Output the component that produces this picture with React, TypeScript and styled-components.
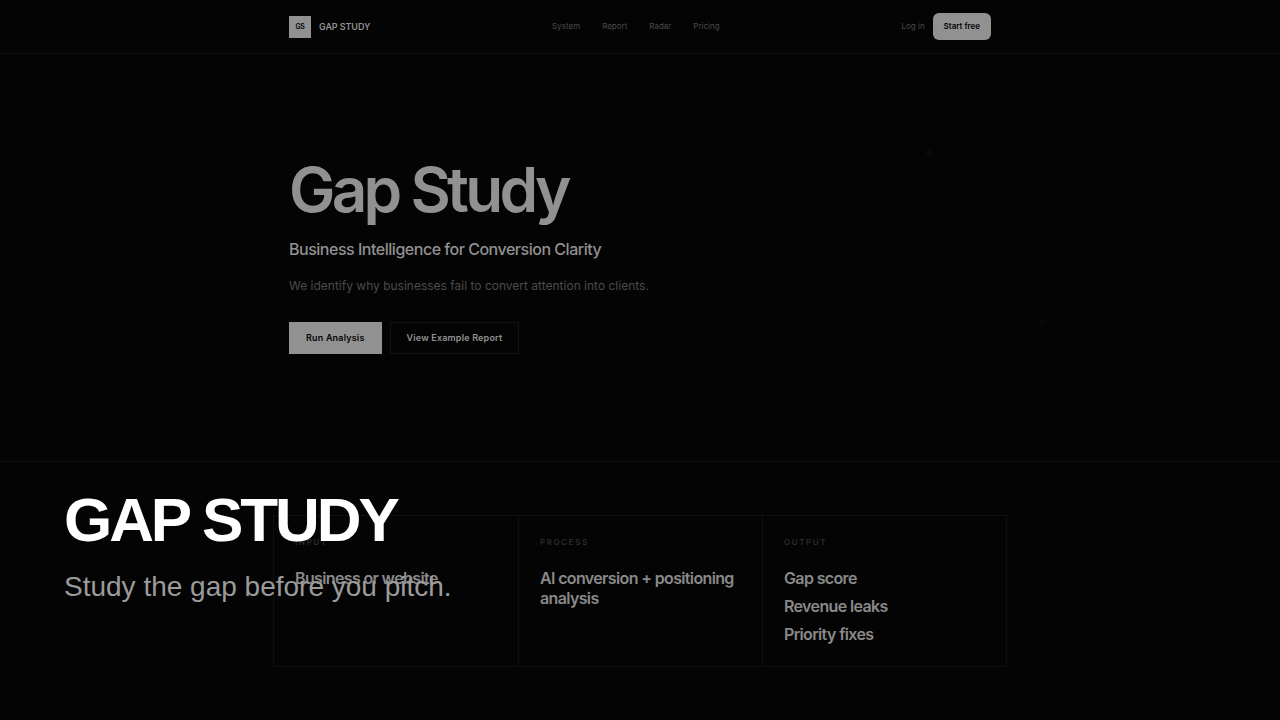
import React from "react";
import styled, { createGlobalStyle, css } from "styled-components";

const GlobalStyle = createGlobalStyle`
  *, *::before, *::after { box-sizing: border-box; }
  html { background: #040404; }
  body {
    margin: 0;
    background: #040404;
    color: #919191;
    font-family: Inter, "Liberation Sans", sans-serif;
  }
  h1, h2, p, ul { margin: 0; padding: 0; }
  ul { list-style: none; }
  a { color: inherit; text-decoration: none; }
  button { font-family: inherit; cursor: pointer; }
`;

const Page = styled.div`
  position: relative;
  min-height: 100vh;
`;

const Container = styled.div`
  width: 100%;
  max-width: 734px;
  margin: 0 auto;
  padding: 0 16px;
`;

const Header = styled.header`
  border-bottom: 1px solid #101010;
`;

const HeaderRow = styled(Container)`
  display: flex;
  align-items: center;
  justify-content: space-between;
  height: 53px;
`;

const Brand = styled.a`
  display: flex;
  align-items: center;
  gap: 8px;
  font-size: 9px;
  font-weight: 600;
  letter-spacing: -0.01em;
`;

const BrandMark = styled.span`
  display: grid;
  place-items: center;
  width: 22px;
  height: 22px;
  background: #919191;
  color: #040404;
  font-size: 7px;
  letter-spacing: -0.04em;
`;

const Nav = styled.nav`
  display: flex;
  gap: 22px;
  font-size: 8px;
  line-height: 11px;
  color: #4b4b4b;
`;

const Account = styled.div`
  display: flex;
  align-items: center;
  gap: 8px;
  font-size: 8px;
  line-height: 11px;
  color: #4b4b4b;
`;

const StartButton = styled.button`
  height: 27px;
  padding: 0 11px;
  border: 0;
  border-radius: 6px;
  background: #919191;
  color: #040404;
  font-size: 8px;
  line-height: 11px;
  font-weight: 600;
`;

const Hero = styled.section`
  position: relative;
  border-bottom: 1px solid #101010;
  padding: 104px 0 107px;
`;

const Title = styled.h1`
  font-size: 62px;
  line-height: 64px;
  font-weight: 600;
  letter-spacing: -0.06em;
`;

const Tagline = styled.p`
  margin-top: 15px;
  font-size: 16px;
  line-height: 24px;
  letter-spacing: -0.03em;
  font-weight: 500;
`;

const Description = styled.p`
  margin-top: 15px;
  font-size: 12px;
  line-height: 20px;
  color: #4b4b4b;
`;

const Actions = styled.div`
  display: flex;
  gap: 8px;
  margin-top: 26px;
`;

const ActionButton = styled.button<{ $primary?: boolean }>`
  height: 32px;
  padding: 0 16px;
  border: 1px solid #131313;
  background: transparent;
  color: #919191;
  font-size: 9px;
  line-height: 12px;
  letter-spacing: 0.02em;
  font-weight: 600;
  ${({ $primary }) =>
    $primary &&
    css`
      border-color: #919191;
      background: #919191;
      color: #040404;
    `}
`;

const Nodes = styled.svg`
  position: absolute;
  top: 90px;
  left: calc(50% + 280px);
`;

const Flow = styled.section`
  width: 100%;
  max-width: 734px;
  margin: 53px auto;
  display: grid;
  grid-template-columns: repeat(3, 1fr);
  border: 1px solid #101010;
`;

const Step = styled.div`
  min-height: 150px;
  padding: 20px 21px;
  & + & { border-left: 1px solid #101010; }
`;

const StepLabel = styled.h2`
  font-size: 8px;
  line-height: 12px;
  font-weight: 500;
  letter-spacing: 0.2em;
  text-transform: uppercase;
  color: #303030;
`;

const StepList = styled.ul`
  display: grid;
  gap: 8px;
  margin-top: 20px;
  font-size: 16px;
  line-height: 20px;
  font-weight: 600;
  letter-spacing: -0.04em;
  color: #898989;
`;

const Caption = styled.div`
  position: absolute;
  left: 64px;
  top: 488px;
  font-family: "Liberation Sans", Arial, sans-serif;
  pointer-events: none;
`;

const CaptionTitle = styled.p`
  color: #ffffff;
  font-size: 62px;
  line-height: 64px;
  font-weight: 700;
  letter-spacing: -0.05em;
`;

const CaptionText = styled.p`
  margin-top: 19px;
  color: #9b9b9b;
  font-size: 28px;
  line-height: 32px;
`;

const links = ["System", "Report", "Radar", "Pricing"];

const steps = [
  { label: "Input", items: ["Business or website"] },
  { label: "Process", items: ["AI conversion + positioning analysis"] },
  { label: "Output", items: ["Gap score", "Revenue leaks", "Priority fixes"] },
];

export default function App() {
  return (
    <Page>
      <GlobalStyle />
      <Header>
        <HeaderRow>
          <Brand href="#">
            <BrandMark>GS</BrandMark>
            GAP STUDY
          </Brand>
          <Nav>
            {links.map((link) => (
              <a key={link} href={`#${link.toLowerCase()}`}>{link}</a>
            ))}
          </Nav>
          <Account>
            <a href="#login">Log in</a>
            <StartButton type="button">Start free</StartButton>
          </Account>
        </HeaderRow>
      </Header>
      <main>
        <Hero>
          <Container>
            <Title>Gap Study</Title>
            <Tagline>Business Intelligence for Conversion Clarity</Tagline>
            <Description>
              We identify why businesses fail to convert attention into clients.
            </Description>
            <Actions>
              <ActionButton type="button" $primary>Run Analysis</ActionButton>
              <ActionButton type="button">View Example Report</ActionButton>
            </Actions>
          </Container>
          <Nodes width="130" height="190" viewBox="0 0 130 190" aria-hidden="true">
            <circle cx="9" cy="9" r="4" fill="#080808" />
            <circle cx="122" cy="179" r="3" fill="#080808" />
          </Nodes>
        </Hero>
        <Flow>
          {steps.map((step) => (
            <Step key={step.label}>
              <StepLabel>{step.label}</StepLabel>
              <StepList>
                {step.items.map((item) => (
                  <li key={item}>{item}</li>
                ))}
              </StepList>
            </Step>
          ))}
        </Flow>
      </main>
      <Caption>
        <CaptionTitle>GAP STUDY</CaptionTitle>
        <CaptionText>Study the gap before you pitch.</CaptionText>
      </Caption>
    </Page>
  );
}
